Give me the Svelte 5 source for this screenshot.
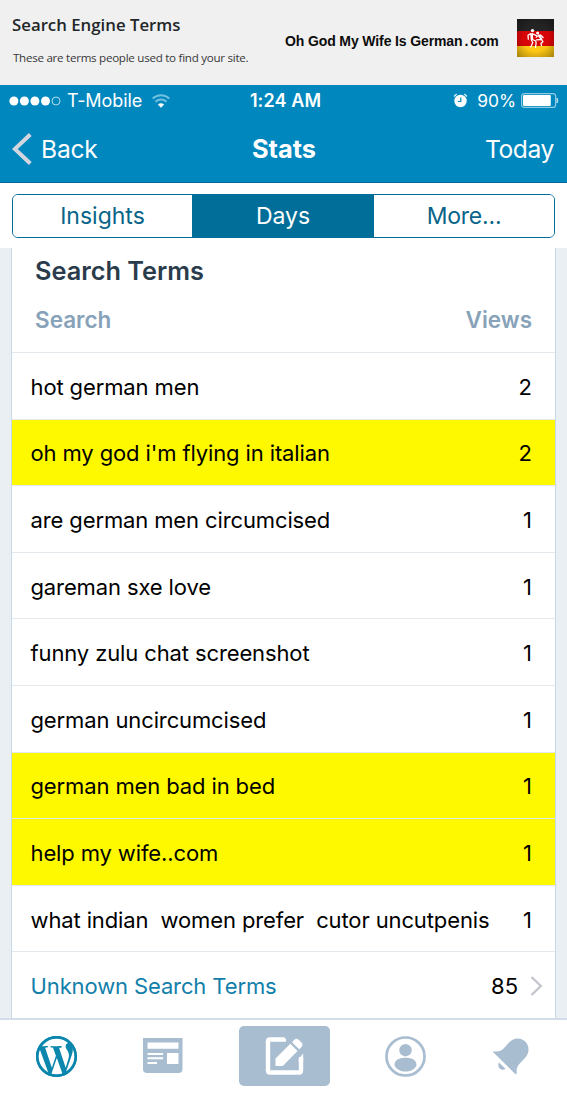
<!-- Search terms stats screen -->
<script>
    const terms = [
        { text: "hot german men", views: 2 },
        { text: "oh my god i'm flying in italian", views: 2, marked: true },
        { text: "are german men circumcised", views: 1 },
        { text: "gareman sxe love", views: 1 },
        { text: "funny zulu chat screenshot", views: 1 },
        { text: "german uncircumcised", views: 1 },
        { text: "german men bad in bed", views: 1, marked: true },
        { text: "help my wife..com", views: 1, marked: true },
        { text: "what indian  women prefer  cutor uncutpenis", views: 1 },
    ];

    const tabs = ["Insights", "Days", "More..."];
    let active = $state("Days");
</script>

<div class="screen">
    <header class="banner">
        <div class="intro">
            <h1>Search Engine Terms</h1>
            <p>These are terms people used to find your site.</p>
        </div>
        <div class="site">Oh God My Wife Is German<span class="dot">.</span>com</div>
        <svg class="flag" viewBox="0 0 37 38" width="37" height="38">
            <defs>
                <radialGradient id="shade" r="0.75">
                    <stop offset="0.45" stop-color="#000" stop-opacity="0" />
                    <stop offset="1" stop-color="#000" stop-opacity="0.4" />
                </radialGradient>
            </defs>
            <rect width="37" height="13" fill="#242424" />
            <rect y="12" width="37" height="15" fill="#d80508" />
            <rect y="27" width="37" height="11" fill="#ffc814" />
            <rect width="37" height="38" fill="url(#shade)" />
            <g fill="none" stroke="#fff" stroke-width="1.3" stroke-linecap="round" stroke-linejoin="round">
                <circle cx="15.5" cy="11.6" r="1.7" fill="#fff" stroke="none" />
                <circle cx="20.6" cy="14" r="1.5" fill="#fff" stroke="none" />
                <path d="M14.6 15.500l.3 4.500" stroke-width="2.600" />
                <path d="M13.800 14.600l-2.800 1.600.3 4M15.500 14.800l4 1.800M14.300 21l1.500 2.500-2 4.500M15.500 20.500l3.300 1.500.3 2-.6 4.300" />
                <path d="M22 16.500l2.300 3.500" stroke-width="2.200" />
                <path d="M21.700 16.500l-2.500 1.700M23.500 16l2.600 2.500M24 20.500l-4.500.3M24.600 20.500l1.300 2.200-2 1.700.6 2.300" />
            </g>
        </svg>
    </header>

    <div class="topbar">
        <div class="status">
            <div class="carrier">
                <svg width="52" height="12" viewBox="0 0 52 12">
                    <g fill="#fff">
                        <circle cx="4.9" cy="6" r="4.5" />
                        <circle cx="15.4" cy="6" r="4.5" />
                        <circle cx="25.9" cy="6" r="4.5" />
                        <circle cx="36.5" cy="6" r="4.5" />
                    </g>
                    <circle cx="47" cy="6" r="4" fill="none" stroke="#b5dcec" />
                </svg>
                <span class="network">T-Mobile</span>
                <svg class="wifi" width="18" height="14" viewBox="0 0 18 14">
                    <g fill="none" stroke="#72c0e0" stroke-width="2">
                        <path d="M.7 4.6a12 12 0 0 1 16.6 0" />
                        <path d="M3.5 7.8a8 8 0 0 1 11 0" />
                    </g>
                    <path d="M5.9 10.6a4.500 4.500 0 0 1 6.200 0L9 13.800z" fill="#fff" />
                </svg>
            </div>
            <div class="time">1:24 AM</div>
            <div class="power">
                <svg class="alarm" width="15" height="15" viewBox="0 0 15 15">
                    <circle cx="7.5" cy="8" r="6.2" fill="#fff" />
                    <path d="M1 3.500L3.700 1M14 3.500L11.300 1" stroke="#d8edf6" stroke-width="1.4" />
                    <path d="M7.800 4.500v4H5" fill="none" stroke="#0087be" stroke-width="1.2" />
                </svg>
                <span class="percent">90%</span>
                <svg width="38" height="15" viewBox="0 0 38 15">
                    <rect x=".6" y=".6" width="34" height="13.8" rx="2.5" fill="none" stroke="#8fcbe2" stroke-width="1.2" />
                    <rect x="2" y="2" width="27.8" height="11" rx="1" fill="#fff" />
                    <path d="M36 5q1.700 2.500 0 5z" fill="#b5dcec" stroke="#b5dcec" />
                </svg>
            </div>
        </div>
        <nav class="nav">
            <div class="back">
                <svg width="20" height="32" viewBox="0 0 20 32">
                    <path d="M18.300 1.500L2.800 16l15.500 14.500" fill="none" stroke="#d3d6df" stroke-width="4" />
                </svg>
                <span>Back</span>
            </div>
            <h2>Stats</h2>
            <div class="today">Today</div>
        </nav>
    </div>

    <div class="filter">
        <div class="tabs">
            {#each tabs as tab}
                <button class:active={tab === active} onclick={() => (active = tab)}>{tab}</button>
            {/each}
        </div>
    </div>

    <main>
        <section class="card">
            <div class="cardhead">
                <h3>Search Terms</h3>
                <div class="columns">
                    <span>Search</span>
                    <span>Views</span>
                </div>
            </div>
            <div class="rows">
                {#each terms as term}
                    <div class="row" class:marked={term.marked}>
                        <span class="term">{term.text}</span>
                        <span class="views">{term.views}</span>
                    </div>
                {/each}
                <div class="row unknown">
                    <span class="term">Unknown Search Terms</span>
                    <span class="views">85</span>
                    <svg width="13" height="20" viewBox="0 0 13 20">
                        <path d="M1.500 1l9.300 9-9.300 9" fill="none" stroke="#c3c6cc" stroke-width="2.4" />
                    </svg>
                </div>
            </div>
        </section>
    </main>

    <footer class="tabbar">
        <div class="tab">
            <svg width="41" height="41" viewBox="0 0 24 24">
                <path fill="#0b86ad" fill-rule="evenodd" d="M21.469 6.825c.84 1.537 1.318 3.3 1.318 5.175 0 3.979-2.156 7.456-5.363 9.325l3.295-9.527c.615-1.54.82-2.771.82-3.864 0-.405-.026-.78-.07-1.11m-7.981.105c.647-.03 1.232-.105 1.232-.105.582-.075.514-.93-.067-.899 0 0-1.755.135-2.88.135-1.064 0-2.85-.15-2.85-.15-.585-.03-.661.855-.075.885 0 0 .54.061 1.125.09l1.68 4.605-2.37 7.08L5.354 6.9c.649-.03 1.234-.1 1.234-.1.585-.075.516-.93-.065-.896 0 0-1.746.138-2.874.138-.2 0-.438-.008-.69-.015C4.911 3.15 8.235 1.215 12 1.215c2.809 0 5.365 1.072 7.286 2.833-.046-.003-.091-.009-.141-.009-1.06 0-1.812.923-1.812 1.914 0 .89.513 1.643 1.06 2.531.411.72.89 1.643.89 2.977 0 .915-.354 1.994-.821 3.479l-1.075 3.585-3.9-11.61.001.014zM12 22.784c-1.059 0-2.081-.153-3.048-.437l3.237-9.406 3.315 9.087c.024.053.05.101.078.149-1.12.393-2.325.609-3.582.609M1.211 12c0-1.564.336-3.05.935-4.39L7.29 21.709C3.694 19.96 1.212 16.271 1.211 12M12 0C5.385 0 0 5.385 0 12s5.385 12 12 12 12-5.385 12-12S18.615 0 12 0" />
                <circle cx="12" cy="12" r="11.2" fill="none" stroke="#0b86ad" stroke-width="1.5" />
            </svg>
        </div>
        <div class="tab reader">
            <svg width="40" height="36" viewBox="0 0 40 36">
                <path d="M0 0h39.500v31q0 4-4 4H4q-4 0-4-4z" fill="#a9bdd0" />
                <path d="M4.500 4.500h31v6.300h-31zM24 15h11.500v11H24zM4.500 15H20v2H4.500zM4.500 19.300H20v2H4.500zM4.500 24H14v2H4.500z" fill="#fff" />
            </svg>
        </div>
        <div class="tab compose">
            <svg width="40" height="40" viewBox="0 0 40 40">
                <path d="M21 3.500H5q-2 0-2 2v29q0 2 2 2h29q2 0 2-2V21" fill="none" stroke="#fff" stroke-width="4.4" />
                <path d="M18 0h22v23z" fill="#a9bdd0" />
                <path d="M10.500 30v-7.500L25.300 7.800l7.200 7.200L17.800 30zM27 6.200l2.300-2.400q2.200-2 4.400 0l2.800 2.800q2 2.200 0 4.400l-2.300 2.300z" fill="#fff" />
                <path d="M33.700 23l4.500-5.500V26h-4.500z" fill="#fff" />
            </svg>
        </div>
        <div class="tab me">
            <svg width="41" height="41" viewBox="0 0 41 41">
                <circle cx="20.5" cy="20.5" r="19" fill="none" stroke="#a9bdd0" stroke-width="2.7" />
                <circle cx="20.5" cy="14.2" r="6.2" fill="#a9bdd0" />
                <path d="M9.500 28.700c0-4.600 4.400-7 11-7s11 2.400 11 7c0 3-5 6.800-11 6.800s-11-3.800-11-6.800z" fill="#a9bdd0" />
            </svg>
        </div>
        <div class="tab">
            <svg width="37" height="37" viewBox="0 0 37 37">
                <path d="M.8 13.200c4.500.8 8.200-.5 11.200-4.300l4.200-4.600C20.500-.2 27.500-1 32.200 3.600c4.700 4.700 4.300 11.700-.2 16.400l-4.800 5c-3.200 3.100-4 6.200-3.500 10.500q-.4 1.300-1.500.4L.5 14.600q-.7-1 .3-1.400z" fill="#a9bdd0" />
                <path d="M6 24.500l6.500 6.300c-1.800 1.500-4.300 1.200-5.800-.4-1.600-1.700-1.900-4-.7-5.900z" fill="#a9bdd0" />
            </svg>
        </div>
    </footer>
</div>

<style>
    :global(body){
        margin: 0;
        background: #fff;
    }

    .screen{
        display: flex;
        flex-direction: column;
        width: 567px;
        height: 1094px;
        overflow: hidden;
        font-family: Inter, "Liberation Sans", sans-serif;
    }

    h1, h2, h3, p{margin: 0;}

    svg{
        display: block;
        flex: none;
    }

    /* Banner */
    .banner{
        display: flex;
        align-items: flex-start;
        box-sizing: border-box;
        height: 85px;
        padding: 14px 13px 0 12px;
        background: #f0f0f0;
        white-space: nowrap;
    }

    .intro{
        width: 273px;
        font-family: "Open Sans", sans-serif;
        color: #222629;
    }

    .intro h1{
        font-size: 16.8px;
        font-weight: 600;
        line-height: 22px;
    }

    .intro p{
        margin-top: 14px;
        padding-left: 1px;
        font-size: 11.6px;
        letter-spacing: -0.27px;
        line-height: 16px;
        color: #383838;
    }

    .site{
        flex: 1;
        margin-top: 18px;
        font-family: "Liberation Sans", sans-serif;
        font-size: 14px;
        font-weight: bold;
        line-height: 18px;
        letter-spacing: -0.12px;
        color: #0c0c0c;
    }

    .dot{margin: 0 2px;}

    .flag{margin-top: 5px;}

    /* Status bar and navigation */
    .topbar{
        box-sizing: border-box;
        height: 98px;
        background: #0087be;
        border-bottom: 1px solid #006c9a;
        color: #fff;
    }

    .status, .nav{
        display: grid;
        grid-template-columns: 1fr auto 1fr;
        align-items: center;
    }

    .status{
        height: 31px;
        padding: 0 8px 0 9px;
        font-size: 18px;
    }

    .carrier, .power{
        display: flex;
        align-items: center;
    }

    .network{
        margin-left: 6px;
        letter-spacing: -0.1px;
    }

    .wifi{margin-left: 10px;}

    .time{
        padding-left: 3px;
        font-weight: 600;
        letter-spacing: 0.1px;
    }

    .power{justify-content: flex-end;}

    .alarm{margin-right: 9px;}

    .percent{
        margin-right: 5px;
        font-size: 17.4px;
    }

    .nav{
        height: 65px;
        padding: 0 13px 0 12px;
        font-size: 24.6px;
    }

    .nav h2{
        padding-left: 2px;
        font-size: 25.4px;
        font-weight: 700;
    }

    .back{
        display: flex;
        align-items: center;
        gap: 9px;
        letter-spacing: -0.2px;
    }

    .today{
        text-align: right;
        letter-spacing: -0.4px;
    }

    /* Period switch */
    .filter{
        box-sizing: border-box;
        height: 65px;
        padding: 11px 12px 10px;
    }

    .tabs{
        display: grid;
        grid-template-columns: 179px 182px 1fr;
        box-sizing: border-box;
        height: 44px;
        border: 1.5px solid #006e98;
        border-radius: 6px;
        overflow: hidden;
    }

    .tabs button{
        border: 0;
        padding: 0;
        background: #fff;
        color: #086488;
        font: inherit;
        font-size: 23px;
    }

    .tabs .active{
        background: #006e98;
        color: #fff;
    }

    .tabs button:last-child{letter-spacing: -0.2px;}

    /* Terms list */
    main{
        height: 770px;
        padding: 0 11px;
        background: #e9eff3;
        border-bottom: 2px solid #d3dee8;
    }

    .card{
        box-sizing: border-box;
        height: 770px;
        background: #fff;
        border: solid #c8d9e7;
        border-width: 0 1px;
    }

    .cardhead{
        box-sizing: border-box;
        height: 104px;
        padding: 8px 23px 0;
    }

    .cardhead h3{
        font-size: 25.3px;
        font-weight: 600;
        line-height: 30px;
        color: #2a3b4b;
    }

    .columns{
        display: flex;
        justify-content: space-between;
        margin-top: 19px;
        font-size: 22.5px;
        font-weight: 600;
        line-height: 30px;
        color: #87a2b9;
    }

    .rows{
        display: grid;
        grid-template-rows: repeat(10, 66.6px);
    }

    .row{
        display: flex;
        align-items: center;
        box-sizing: border-box;
        padding: 2px 23px 0 18.5px;
        border-top: 1.5px solid #e4e9ee;
        font-size: 22px;
        color: #000;
    }

    .marked{
        background: #fff900;
        background-clip: padding-box;
    }

    .term{
        flex: 1;
        letter-spacing: -0.12px;
        white-space: pre;
    }

    .unknown{padding-right: 12px;}

    .unknown .term{color: #1280aa;}

    .unknown svg{margin-left: 12px;}

    /* Bottom tabs */
    .tabbar{
        display: flex;
        justify-content: space-between;
        align-items: center;
        box-sizing: border-box;
        height: 74px;
        padding: 0 37px 2px 36px;
        background: #fff;
    }

    .reader{margin: 0 -5px 0 5px;}

    .me{margin: 0 6px 0 -6px;}

    .compose{
        display: flex;
        justify-content: center;
        align-items: center;
        width: 91px;
        height: 60px;
        background: #a9bdd0;
        border-radius: 5px;
    }
</style>
